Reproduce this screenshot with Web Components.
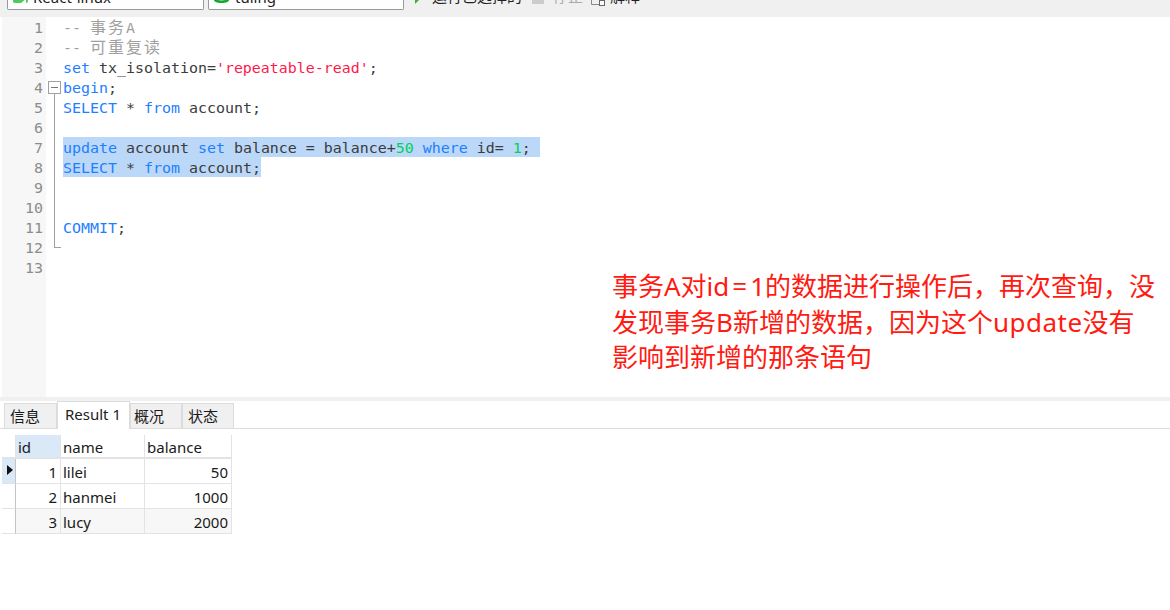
<!DOCTYPE html>
<html>
<head>
<meta charset="utf-8">
<style>
html,body{margin:0;padding:0;background:#fff;}
body{width:1170px;height:610px;overflow:hidden;font-family:"Liberation Sans","Noto Sans CJK SC",sans-serif;}
</style>
</head>
<body>
<query-window></query-window>
<script>
const cjk = `"Noto Sans CJK SC"`

class ToolBar extends HTMLElement{
    constructor(){
        super()
        this.attachShadow({mode:"open"})
        this.shadowRoot.innerHTML = `
        <style>
            :host{display:flex;height:17px;background:#f0f0f0;overflow:hidden;font:15px "Noto Sans",${cjk},sans-serif;color:#222;}
            .combo{height:9px;background:#fff;border:1px solid #999;border-top:0;border-bottom-width:1.5px;border-radius:0 0 2px 2px;position:relative;overflow:hidden;flex:none;}
            .combo span{position:absolute;top:-12px;line-height:18px;white-space:nowrap;}
            .one{width:195px;margin-left:7px;}
            .two{width:194px;margin-left:4px;}
            .combo svg{position:absolute;left:4px;top:-11px;}
            .act{height:17px;position:relative;flex:none;overflow:hidden;}
            .act span{position:absolute;top:-13px;line-height:18px;white-space:nowrap;}
            .act svg{position:absolute;left:0;top:0;}
        </style>
        <div class="combo one"><svg width="17" height="15"><rect x="1" y="0" width="15" height="14" rx="2" fill="#4ecb5a"/><path d="M9 14l5-4v4z" fill="#fff"/></svg><span style="left:25px">React-linux</span></div>
        <div class="combo two"><svg width="17" height="15"><path d="M1 0h15v11c0 2-3 3-7.500 3s-7.500-1-7.500-3z" fill="#18a62e"/><path d="M3 8c2 2 9 2 11 0v2c-2 2-9 2-11 0z" fill="#fff"/></svg><span style="left:26px">tuling</span></div>
        <div class="act" style="margin-left:10px;width:118px"><svg width="8" height="17"><path d="M1 0h4l-4 4z" fill="#3cae3c"/></svg><span style="left:18px">运行已选择的</span></div>
        <div class="act" style="width:59px;color:#aaa"><svg width="14" height="17"><rect x="0" y="0" width="12" height="4" fill="#ccc"/></svg><span style="left:21px">停止</span></div>
        <div class="act" style="width:60px"><svg width="15" height="17"><path d="M0.500 0v4.500h8" fill="none" stroke="#888"/><rect x="8.500" y="0.500" width="5" height="5" fill="#fff" stroke="#666"/></svg><span style="left:19px">解释</span></div>
        `
    }
}
customElements.define("tool-bar",ToolBar)

class CodeLine extends HTMLElement{
    constructor(){
        super()
        this.attachShadow({mode:"open"})
        this.shadowRoot.innerHTML = `
        <style>
            :host{display:flex;height:20px;line-height:22px;white-space:pre;}
            .no{width:44px;margin-left:2px;padding-right:3px;text-align:right;color:#8c8c8c;background:#f7f7f7;flex:none;box-sizing:border-box;}
            .fold{width:17px;flex:none;position:relative;}
            .txt{flex:none;height:20px;}
            :host([sel]) .txt{background:#bbd8f8;}
            .fold i{position:absolute;left:8px;top:0;bottom:0;border-left:1px solid #a0a0a0;}
            .fold b{position:absolute;left:2px;top:4px;width:13px;height:13px;border:1px solid #a0a0a0;background:#fff;box-sizing:border-box;}
            .fold b::after{content:"";position:absolute;left:2px;right:2px;top:5px;height:1px;background:#777;}
            :host([open]) .fold i{top:17px;}
            :host([end]) .fold i{bottom:9px;}
            .fold u{position:absolute;left:8px;width:7px;top:10px;height:1px;background:#a0a0a0;}
        </style>
        <div class="no"></div><div class="fold"></div><div class="txt"><slot></slot></div>
        `
    }
    connectedCallback(){
        this.shadowRoot.querySelector(".no").textContent = this.getAttribute("n")
        const f = this.shadowRoot.querySelector(".fold")
        if(this.hasAttribute("open")) f.innerHTML = "<b></b><i></i>"
        else if(this.hasAttribute("end")) f.innerHTML = "<i></i><u></u>"
        else if(this.hasAttribute("inside")) f.innerHTML = "<i></i>"
    }
}
customElements.define("code-line",CodeLine)

class SqlEditor extends HTMLElement{
    constructor(){
        super()
        this.attachShadow({mode:"open"})
        this.shadowRoot.innerHTML = `
        <style>
            :host{display:block;height:380px;background:#fff;font:14.95px "DejaVu Sans Mono","Liberation Mono",${cjk},monospace;color:#3c3c3c;overflow:hidden;}
            .filler{height:120px;background:linear-gradient(90deg,#fff 2px,#f7f7f7 2px,#f7f7f7 46px,#fff 46px);}
        </style>
        <slot></slot>
        <div class="filler"></div>
        `
    }
}
customElements.define("sql-editor",SqlEditor)

class ResultTabs extends HTMLElement{
    constructor(){
        super()
        this.attachShadow({mode:"open"})
        this.shadowRoot.innerHTML = `
        <style>
            :host{display:flex;height:27px;padding:0 0 0 4px;border-bottom:1px solid #dcdcdc;font:15px "Noto Sans",${cjk},sans-serif;color:#1a1a1a;align-items:flex-end;}
            .t{height:25px;line-height:24px;background:#f0f0f0;border:1px solid #dcdcdc;border-bottom:0;box-sizing:border-box;flex:none;}
            .on{background:#fff;height:28px;line-height:24px;margin-bottom:-1px;color:#222;}
        </style>
        <div class="t" style="width:53px;padding-left:5px">信息</div><div class="t on" style="width:73px;padding-left:7px">Result 1</div><div class="t" style="width:52px;padding-left:3px">概况</div><div class="t" style="width:52px;padding-left:5px">状态</div>
        `
    }
}
customElements.define("result-tabs",ResultTabs)

class ResultGrid extends HTMLElement{
    constructor(){
        super()
        this.attachShadow({mode:"open"})
        const rows = [["1","lilei","50"],["2","hanmei","1000"],["3","lucy","2000"]]
        this.shadowRoot.innerHTML = `
        <style>
            :host{display:grid;grid-template-columns:14px 45px 84px 87px;width:max-content;margin:6px 0 0 2px;font:15px "Noto Sans",sans-serif;color:#1a1a1a;}
            div{box-sizing:border-box;border-right:1px solid #e3e3e3;border-bottom:1px solid #e3e3e3;height:25px;line-height:26px;padding:0 3px 0 2px;white-space:nowrap;}
            .head{height:24px;line-height:25px;background:#fff;border-bottom:2px solid #e3e3e3;}
            .head.id{background:#d9e9f7;}
            .gut{padding:0;position:relative;border-right-color:#c4c4c4;background:#fff;}
            .gut.cur{background:#d9e9f7;}
            .gut.cur::after{content:"";position:absolute;left:5px;top:6px;border-left:6px solid #111;border-top:5px solid transparent;border-bottom:5px solid transparent;}
            .num{text-align:right;}
            .alt{background:#f7f7f7;}
        </style>
        <div class="head gut" style="border-right-color:#e3e3e3;border-bottom-color:#e3e3e3"></div><div class="head id">id</div><div class="head">name</div><div class="head">balance</div>
        ${rows.map((r,i)=>{
            const a = i==2 ? "alt" : ""
            return `<div class="gut ${i==0?"cur":""}"></div><div class="num ${a}">${r[0]}</div><div class="${a}">${r[1]}</div><div class="num ${a}">${r[2]}</div>`
        }).join("")}
        `
    }
}
customElements.define("result-grid",ResultGrid)

class NoteText extends HTMLElement{
    constructor(){
        super()
        this.attachShadow({mode:"open"})
        this.shadowRoot.innerHTML = `
        <style>
            :host{position:absolute;left:612px;top:269px;width:556px;font:26px/35.5px "Noto Sans",${cjk},sans-serif;color:#ff1a12;}
        </style>
        <slot></slot>
        `
    }
}
customElements.define("note-text",NoteText)

class QueryWindow extends HTMLElement{
    constructor(){
        super()
        this.attachShadow({mode:"open"})
        this.shadowRoot.innerHTML = `
        <style>
            :host{display:block;height:610px;position:relative;}
            .k{color:#1e80ff;} .s{color:#ff1a4b;} .n{color:#00d060;} .c{color:#a0a0a0;}
            .w{font-size:16px;letter-spacing:2px;}
            .split{height:4px;background:#f0f0f0;}
            .eq{padding:0 3px;}
            .up{letter-spacing:.5px;}
        </style>
        <tool-bar></tool-bar>
        <sql-editor>
            <code-line n="1"><span class="c">-- <span class="w">事务</span>A</span></code-line>
            <code-line n="2"><span class="c">-- <span class="w">可重复读</span></span></code-line>
            <code-line n="3"><span class="k">set</span> tx_isolation=<span class="s">'repeatable-read'</span>;</code-line>
            <code-line n="4" open><span class="k">begin</span>;</code-line>
            <code-line n="5" inside><span class="k">SELECT</span> * <span class="k">from</span> account;</code-line>
            <code-line n="6" inside></code-line>
            <code-line n="7" inside sel><span class="k">update</span> account <span class="k">set</span> balance = balance+<span class="n">50</span> <span class="k">where</span> id= <span class="n">1</span>; </code-line>
            <code-line n="8" inside sel><span class="k">SELECT</span> * <span class="k">from</span> account;</code-line>
            <code-line n="9" inside></code-line>
            <code-line n="10" inside></code-line>
            <code-line n="11" inside><span class="k">COMMIT</span>;</code-line>
            <code-line n="12" end></code-line>
            <code-line n="13"></code-line>
        </sql-editor>
        <div class="split"></div>
        <result-tabs></result-tabs>
        <result-grid></result-grid>
        <note-text>事务A对id<span class="eq">=</span>1的数据进行操作后，再次查询，没<br>发现事务B新增的数据，因为这个<span class="up">update</span>没有<br>影响到新增的那条语句</note-text>
        `
    }
}
customElements.define("query-window",QueryWindow)
</script>
</body>
</html>
